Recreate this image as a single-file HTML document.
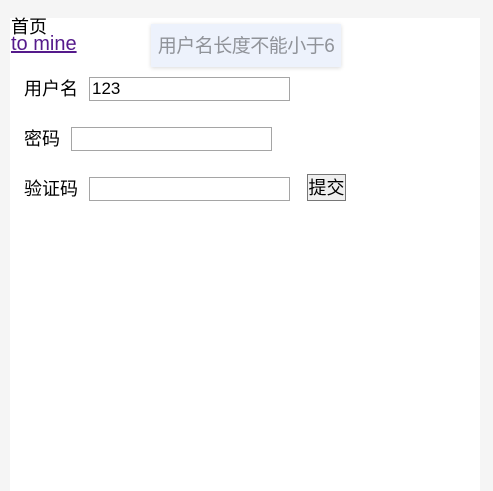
<!DOCTYPE html>
<html><head><meta charset="utf-8"><style>
html,body{margin:0;padding:0;width:493px;height:491px;background:#f5f5f5;overflow:hidden;font-family:"Liberation Sans","Noto Sans CJK SC",sans-serif;}
.panel{position:absolute;left:10px;top:18px;width:470px;height:473px;background:#fff;}
.t{position:absolute;font-size:18px;line-height:18px;color:#000;white-space:nowrap;}
a.t{color:#551a8b;text-decoration:underline;}
.inp{position:absolute;border:1px solid #a5a5a5;background:#fff;font-size:17px;line-height:22px;padding-left:2px;box-sizing:border-box;height:24px;}
.toast{position:absolute;left:151px;top:24px;width:190px;height:43px;background:#edf2fc;box-shadow:0 1px 4px rgba(0,0,0,0.15);color:#909399;font-size:19px;line-height:45px;text-align:center;white-space:nowrap;letter-spacing:-0.5px;}
.btn{position:absolute;left:307px;top:174px;width:39px;height:27px;border:1px solid #767676;background:#efefef;box-sizing:border-box;font-size:18px;line-height:27px;text-align:center;}
</style></head><body>
<div class="panel"></div>
<div class="t" style="left:11px;top:18px">首页</div>
<a class="t" style="left:11px;top:34px;font-size:20px;line-height:20px">to mine</a>
<div class="toast">用户名长度不能小于6</div>
<div class="t" style="left:24px;top:80px">用户名</div>
<div class="inp" style="left:89px;top:77px;width:201px">123</div>
<div class="t" style="left:24px;top:130px">密码</div>
<div class="inp" style="left:71px;top:127px;width:201px"></div>
<div class="t" style="left:24px;top:180px">验证码</div>
<div class="inp" style="left:89px;top:177px;width:201px"></div>
<div class="btn">提交</div>
</body></html>
